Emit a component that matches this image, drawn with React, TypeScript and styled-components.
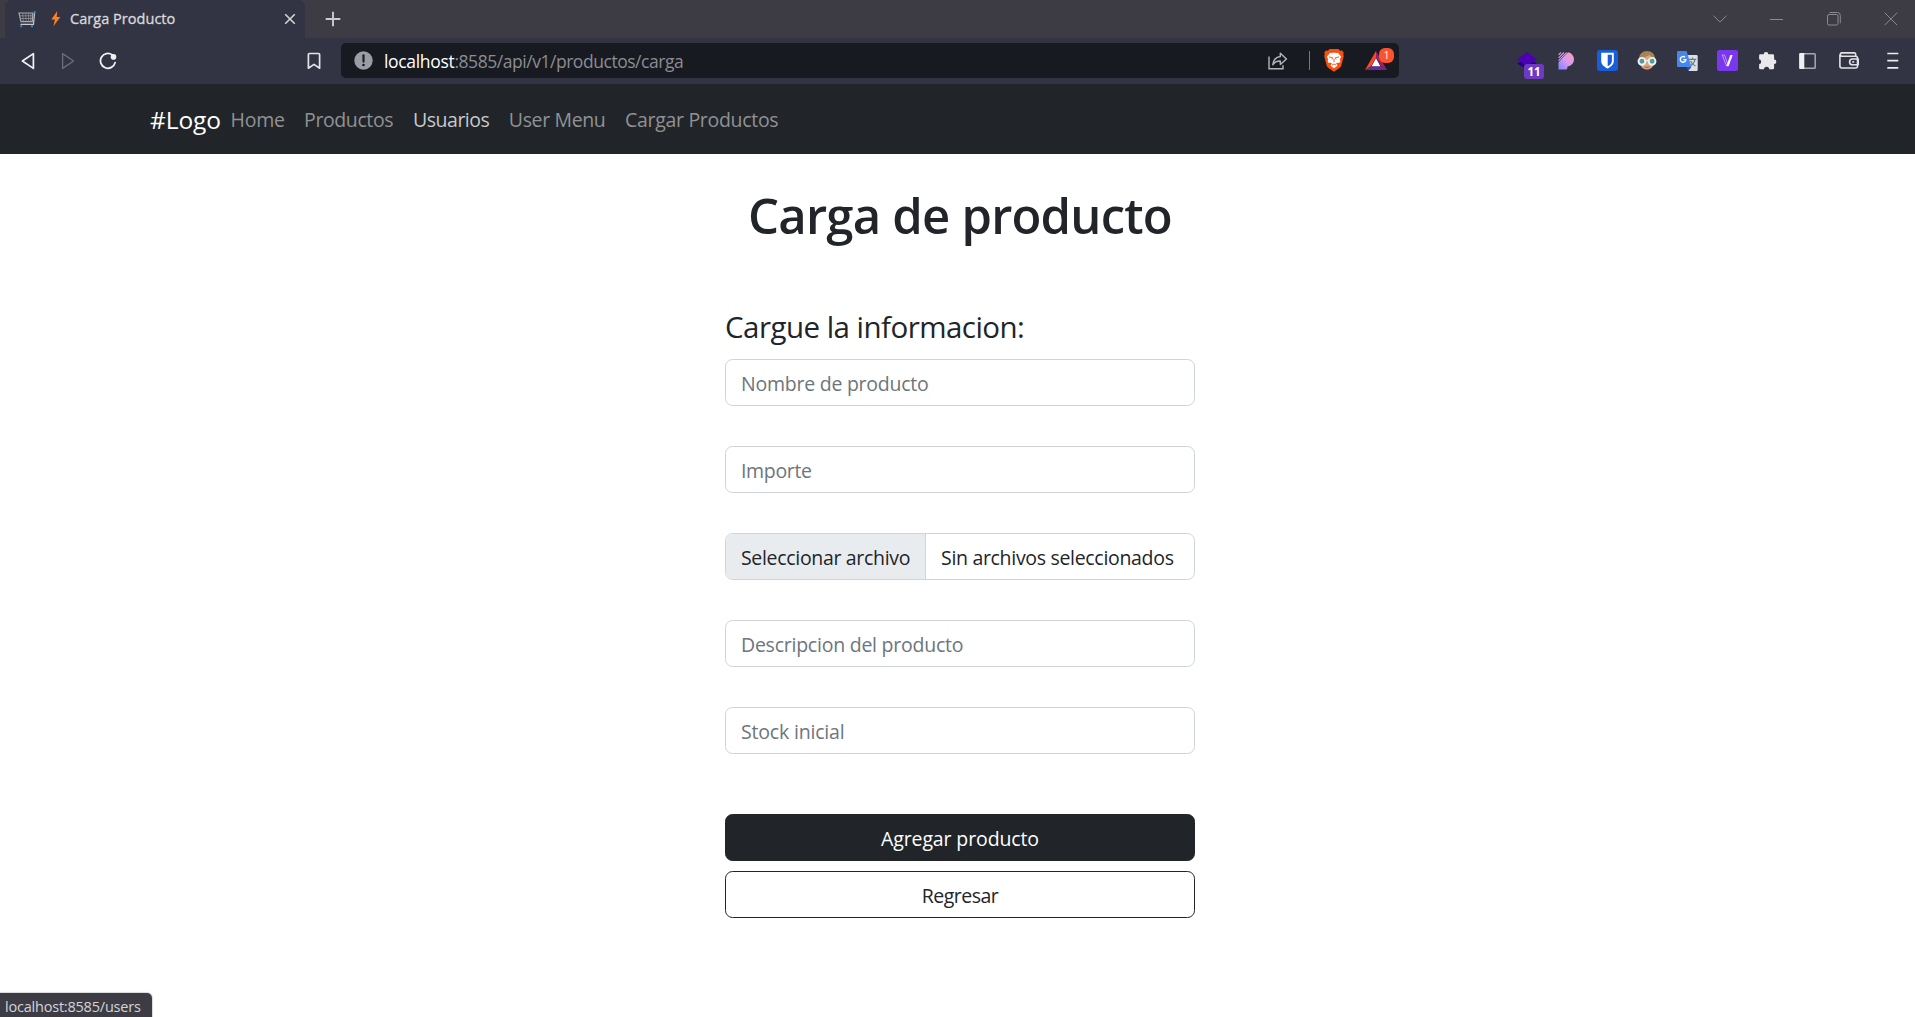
import React from "react";
import styled, { createGlobalStyle } from "styled-components";

const Global = createGlobalStyle`
  * { box-sizing: border-box; }
  body {
    margin: 0;
    background: #fff;
    color: #212529;
    font-family: "Open Sans", "Noto Sans", sans-serif;
    font-size: 19.5px;
    overflow: hidden;
  }
  svg { display: block; flex: none; }
`;

const Window = styled.div`
  display: flex;
  flex-direction: column;
  width: 100%;
  height: 1017px;
  position: relative;
`;

/* ---------- browser chrome ---------- */

const TabStrip = styled.div`
  display: flex;
  height: 38px;
  padding-left: 5px;
  background: #3d3c45;
`;

const Tab = styled.div`
  display: flex;
  align-items: center;
  width: 300px;
  padding: 0 9px 0 13px;
  border-radius: 7px 7px 0 0;
  background: #323443;
`;

const TabTitle = styled.span`
  flex: 1;
  margin-left: 3px;
  padding-bottom: 1px;
  font-size: 14.5px;
  letter-spacing: 0.04px;
  color: #d9d9dd;
  -webkit-text-stroke: 0.3px #d9d9dd;
  white-space: nowrap;
`;

const IconSlot = styled.div<{ $w: number }>`
  display: flex;
  align-items: center;
  justify-content: center;
  flex: none;
  width: ${(p) => p.$w}px;
  height: 100%;
`;

const BoltSlot = styled(IconSlot)`
  padding-left: 8px;
`;

const WindowControls = styled.div`
  display: flex;
  gap: 10px;
  margin-left: auto;
`;

const Toolbar = styled.div`
  display: flex;
  align-items: center;
  height: 46px;
  padding-bottom: 1px;
  background: #323443;
`;

const NavButtons = styled.div`
  display: flex;
  height: 100%;
  padding-left: 8px;
`;

const BookmarkSlot = styled(IconSlot)`
  margin: 0 7px 0 auto;
`;

const ToolbarStart = styled.div`
  display: flex;
  width: 341px;
  height: 100%;
`;

const AddressBar = styled.div`
  display: flex;
  align-items: center;
  width: 1058px;
  height: 35px;
  padding-left: 13px;
  border-radius: 5px;
  background: #171a21;
`;

const Url = styled.div`
  flex: 1;
  margin-left: 11px;
  font-size: 17.5px;
  letter-spacing: -0.46px;
  color: #8b8d92;
  white-space: nowrap;
`;

const Host = styled.span`
  letter-spacing: -0.32px;
  color: #fff;
`;

const Divider = styled.div`
  width: 1px;
  height: 19px;
  margin: 0 14px 0 21px;
  background: #77787c;
`;

const BadgeHost = styled.div`
  position: relative;
  display: flex;
`;

const Rewards = styled(BadgeHost)`
  margin: 0 12px 0 21px;
`;

const RewardBadge = styled.span`
  position: absolute;
  left: 14px;
  top: -3px;
  width: 15px;
  height: 15px;
  border-radius: 6px;
  background: #fb542b;
  color: #fff;
  font-size: 10px;
  line-height: 15px;
  text-align: center;
`;

const CountBadge = styled.span`
  position: absolute;
  left: 7px;
  top: 12px;
  width: 20px;
  height: 15px;
  border-radius: 3px;
  background: #6f3ac2;
  color: #fff;
  font-size: 11.5px;
  font-weight: 700;
  line-height: 16px;
  text-align: center;
`;

const Extensions = styled.div`
  display: flex;
  height: 100%;
  margin-left: auto;
`;

/* ---------- page ---------- */

const Navbar = styled.nav`
  display: flex;
  align-items: center;
  height: 70px;
  padding-left: 150px;
  background: #212529;
`;

const Brand = styled.span`
  width: 80.5px;
  font-size: 24.5px;
  letter-spacing: -0.1px;
  color: #fff;
`;

const NavLinks = styled.div`
  display: grid;
  grid-template-columns: 73.6px 109px 95.7px 116.2px auto;
`;

const NavLink = styled.span<{ $tracking: number; $active?: boolean }>`
  letter-spacing: ${(p) => p.$tracking}px;
  white-space: nowrap;
  color: ${(p) => (p.$active ? "#c8c9ca" : "#909294")};
`;

const Main = styled.main`
  display: flex;
  flex-direction: column;
  align-items: center;
  padding: 31px 0 0 5px;
`;

const Title = styled.h1`
  margin: 0;
  font-size: 49px;
  font-weight: 600;
  line-height: 60px;
  letter-spacing: -0.78px;
`;

const Form = styled.form`
  display: flex;
  flex-direction: column;
  width: 470px;
  margin-top: 59px;
`;

const Legend = styled.div`
  margin: 0 0 9px;
  font-size: 29.5px;
  line-height: 46px;
  letter-spacing: -0.53px;
  white-space: nowrap;
`;

const Fields = styled.div`
  display: flex;
  flex-direction: column;
  gap: 40px;
`;

const Input = styled.input<{ $tracking: number }>`
  width: 100%;
  height: 47px;
  padding: 2px 15px 0;
  border: 1px solid #ced4da;
  border-radius: 7.5px;
  outline: none;
  background: #fff;
  font-family: inherit;
  font-size: 19.5px;
  letter-spacing: ${(p) => p.$tracking}px;
  color: #212529;
  &::placeholder { color: #6c757d; opacity: 1; }
`;

const FileField = styled.div`
  display: flex;
  height: 47px;
  border: 1px solid #ced4da;
  border-radius: 7.5px;
  overflow: hidden;
  line-height: 48px;
  white-space: nowrap;
`;

const FileButton = styled.span`
  width: 200px;
  padding-left: 15px;
  border-right: 1px solid #ced4da;
  background: #e9ecef;
  letter-spacing: -0.32px;
`;

const FileName = styled.span`
  padding-left: 15px;
  letter-spacing: -0.31px;
`;

const Actions = styled.div`
  display: flex;
  flex-direction: column;
  gap: 10px;
  margin-top: 60px;
`;

const Button = styled.button<{ $outline?: boolean }>`
  height: 47px;
  padding: 1px 0 0;
  border: 1px solid #212529;
  border-radius: 7.5px;
  background: ${(p) => (p.$outline ? "#fff" : "#212529")};
  color: ${(p) => (p.$outline ? "#212529" : "#fff")};
  font-family: inherit;
  font-size: 19.5px;
  letter-spacing: ${(p) => (p.$outline ? -0.5 : -0.12)}px;
`;

const StatusBubble = styled.div`
  position: absolute;
  left: 0;
  bottom: 0;
  width: 152px;
  height: 24px;
  padding-left: 5px;
  border-top-right-radius: 5px;
  background: #3d3c45;
  color: #d4d4d8;
  font-size: 14.5px;
  line-height: 28px;
  letter-spacing: -0.21px;
  white-space: nowrap;
  box-shadow: 0 0 1px 1px rgba(0, 0, 0, 0.15);
`;

/* ---------- icons ---------- */

const CartIcon = () => (
  <svg width="18" height="17" viewBox="0 0 18 17" fill="none">
    <path d="M1 2h13.8l-.5 8.600H3z" stroke="#a9abb0" strokeWidth="1.2" />
    <path d="M1.600 4.800h13M2.200 7.500h12.300M4.700 2l.6 8.500M7.700 2l.3 8.500M10.500 2l.1 8.500M12.900 2l-.2 8.500" stroke="#8f9197" strokeWidth=".8" />
    <path d="M16.600 1.200L15.500 13.300H2.500" stroke="#c9cace" strokeWidth="1.2" />
    <path d="M16.400 2.500L16.800 0" stroke="#2196d9" strokeWidth="1.6" />
    <path d="M3.200 14.200v2M14 14.200v2" stroke="#1791dd" strokeWidth="2" />
  </svg>
);

const BoltIcon = () => (
  <svg width="10" height="16" viewBox="0 0 10 16">
    <path d="M6.300 0L.3 8.600h3.600L2.400 15.200 9.300 5.900H5.700z" fill="#fb8026" />
  </svg>
);

const CloseTabIcon = () => (
  <svg width="12" height="12" viewBox="0 0 12 12" stroke="#d4d4d8" strokeWidth="1.6">
    <path d="M1.200 1.200l9.600 9.600M10.800 1.200l-9.600 9.600" />
  </svg>
);

const PlusIcon = () => (
  <svg width="16" height="16" viewBox="0 0 16 16" stroke="#cbcbce" strokeWidth="1.9">
    <path d="M8 .7v14.600M.7 8h14.600" />
  </svg>
);

const ChevronDown = () => (
  <svg width="14" height="8" viewBox="0 0 14 8" fill="none" stroke="#8a8a8f">
    <path d="M.5.7L7 7 13.500.7" />
  </svg>
);

const MinimizeIcon = () => (
  <svg width="13" height="13" viewBox="0 0 13 13" stroke="#8a8a8f">
    <path d="M0 6.500h13" />
  </svg>
);

const RestoreIcon = () => (
  <svg width="14" height="14" viewBox="0 0 14 14" fill="none" stroke="#8a8a8f">
    <rect x=".5" y="2.5" width="10.5" height="10.5" rx="1.5" />
    <path d="M2.500.5h8a2.800 2.800 0 0 1 2.800 2.800v8" />
  </svg>
);

const CloseWindowIcon = () => (
  <svg width="14" height="14" viewBox="0 0 14 14" stroke="#8a8a8f">
    <path d="M.6.6l12.600 12.600M13.200.6L.6 13.200" />
  </svg>
);

const TriangleIcon = ({ flip }: { flip?: boolean }) => (
  <svg width="14" height="18" viewBox="0 0 14 18" fill="none" stroke={flip ? "#6c6d79" : "#f1f1f3"} strokeWidth={flip ? 1.3 : 1.7} strokeLinejoin="round">
    <path d={flip ? "M1.6 1.6v14.8L12.6 9z" : "M12.4 1.6v14.8L1.4 9z"} />
  </svg>
);

const ReloadIcon = () => (
  <svg width="18" height="18" viewBox="0 0 18 18" fill="none">
    <path d="M13.300 2.900A7.400 7.400 0 1 0 16.100 10.600" stroke="#f1f1f3" strokeWidth="1.8" strokeLinecap="round" />
    <circle cx="14.5" cy="4.9" r="2.8" fill="#f1f1f3" />
  </svg>
);

const BookmarkIcon = () => (
  <svg width="14" height="18" viewBox="0 0 14 18" fill="none" stroke="#e4e4e8" strokeWidth="1.7" strokeLinejoin="round">
    <path d="M1.400 2.500a1 1 0 0 1 1-1h9.200a1 1 0 0 1 1 1v13.700L7 12.400l-5.600 3.800z" />
  </svg>
);

const InfoIcon = () => (
  <svg width="19" height="19" viewBox="0 0 19 19">
    <circle cx="9.5" cy="9.5" r="9.2" fill="#9b9da6" />
    <path d="M9.500 4.200v6.400" stroke="#171a21" strokeWidth="2.1" strokeLinecap="round" />
    <circle cx="9.5" cy="14" r="1.3" fill="#171a21" />
  </svg>
);

const ShareIcon = () => (
  <svg width="20" height="18" viewBox="0 0 20 18" fill="none" stroke="#b4b5b8" strokeWidth="1.4">
    <path d="M1 4.400v12.400h14v-3.500" />
    <path d="M12.300 1.200l6.200 5.700-6.200 5.500V9c-3.700-.1-5.800 1.100-7.500 3.800.4-4.600 2.800-7.600 7.500-8.300z" strokeLinejoin="round" />
  </svg>
);

const BraveIcon = () => (
  <svg width="20" height="23" viewBox="0 0 20 23">
    <path d="M5.500 0h9l1.600 1.700 2-.3 1.700 2.400-.6 1.500.6 1.800-2.400 9.200c-.4 1.400-1.200 2.100-2.200 2.900L10 22.700l-5.200-3.500c-1-.8-1.800-1.500-2.200-2.900L.2 7.100l.6-1.800L.2 3.800l1.700-2.400 2 .3z" fill="#f9500f" />
    <path d="M6.100 3.700L8 4l2-.4 2 .4 1.900-.3 3.300 4-1.400 2.600.6 2-1.100 1.700-2.300-.3-.9.900 1.500 2-3.600 2.700-3.600-2.700 1.500-2-.9-.9-2.300.3-1.100-1.700.6-2-1.400-2.600z" fill="#fff" />
    <path d="M5 7.900l3.600.8-.7 1.800M15 7.900l-3.600.8.7 1.800M10 9.800v3.400M8 16l2-1 2 1" stroke="#f9500f" strokeWidth=".9" fill="none" />
  </svg>
);

const BatIcon = () => (
  <svg width="22" height="19" viewBox="0 0 22 19">
    <path d="M11 0L0 19l6-3.700 5-8.800z" fill="#ff4724" />
    <path d="M11 0l11 19-6-3.700-5-8.800z" fill="#9e1f63" />
    <path d="M0 19h22l-6-3.700H6z" fill="#662d91" />
    <path d="M11 7.200l4.400 8H6.600z" fill="#fff" />
  </svg>
);

const LayersIcon = () => (
  <svg width="20" height="18" viewBox="0 0 20 18">
    <path d="M0 11.500L5 9l5 3 5-3 5 2.500-10 6z" fill="#26007c" />
    <path d="M10 0l10 7.200-10 6.600L0 7.200z" fill="#4c00b4" />
  </svg>
);

const PicoIcon = () => (
  <svg width="18" height="18" viewBox="0 0 18 18">
    <defs>
      <linearGradient id="pico" x1="1" y1="0" x2="0" y2="1">
        <stop offset="0" stopColor="#ff9fb2" />
        <stop offset=".5" stopColor="#d79af0" />
        <stop offset="1" stopColor="#7f83ff" />
      </linearGradient>
    </defs>
    <path d="M.5 17.600V10.300L10 .3a7.200 7.200 0 0 1 0 14.200H9.400v1.300c0 1.200-.8 1.800-2 1.800z" fill="url(#pico)" />
    <path d="M.6 2.800L2.900.5M.6 5.800L5.900.5M.6 8.600L8.500.7" stroke="#d7a0e8" strokeWidth="1.1" />
  </svg>
);

const BitwardenIcon = () => (
  <svg width="21" height="21" viewBox="0 0 21 21">
    <rect width="21" height="21" rx="3" fill="#175ddc" />
    <path d="M4.200 2.700h12.600v8.200c0 3.500-2.800 5.600-6.300 7.700-3.500-2.100-6.300-4.200-6.300-7.700z" fill="#fff" />
    <path d="M10.700 4.700h4.200v6.200c0 2.200-1.600 3.800-4.200 5.400z" fill="#175ddc" />
  </svg>
);

const FaceIcon = () => (
  <svg width="20" height="19" viewBox="0 0 20 19">
    <path d="M1.800 9C1.800 3 5.500 0 10 0s8.200 3 8.200 9v4H1.800z" fill="#a58456" />
    <path d="M3.300 8.500L12.500 4l4.200 4.500v3c0 4.500-3 7-6.700 7s-6.700-2.500-6.700-7z" fill="#dca57f" />
    <path d="M7.500 15.700q2.500 1.200 5 0" stroke="#b55f50" strokeWidth="1.2" fill="none" />
    <circle cx="4.9" cy="10.3" r="3.4" fill="#5d979c" stroke="#e6f5f5" strokeWidth="1.9" />
    <circle cx="15.1" cy="10.3" r="3.4" fill="#5d979c" stroke="#e6f5f5" strokeWidth="1.9" />
    <path d="M8.600 9.600h2.800" stroke="#e6f5f5" strokeWidth="1.4" />
  </svg>
);

const TranslateIcon = () => (
  <svg width="21" height="20" viewBox="0 0 21 20">
    <path d="M8 4h11.500a1.200 1.200 0 0 1 1.200 1.200v13.600a1.200 1.200 0 0 1-1.200 1.200h-8z" fill="#dcdfe2" />
    <path d="M12 8.300h7.300M15.600 6.500v1.800M18 8.300c-.6 3-2.300 5.200-5 6.700M13.500 10c1 2.200 2.600 3.900 5 5" stroke="#637984" strokeWidth="1.2" fill="none" />
    <path d="M11.200 20l3.200-4H9.900z" fill="#254fc4" />
    <path d="M1.200 0h8.400l4.800 16H1.200A1.200 1.200 0 0 1 0 14.800V1.200A1.200 1.200 0 0 1 1.200 0z" fill="#4787ed" />
    <path d="M8 6.300a2.800 2.800 0 1 0 .9 2.300H6.300" stroke="#fff" strokeWidth="1.4" fill="none" />
  </svg>
);

const VeeIcon = () => (
  <svg width="21" height="21" viewBox="0 0 21 21">
    <rect width="21" height="21" rx="2.2" fill="#7b37ed" />
    <path d="M5.200 5l4.300 11 1.900-.2L7.500 5z" fill="none" stroke="#cdb4fa" strokeWidth=".8" />
    <path d="M13.300 5h2.400l-4 11H9.400z" fill="#fff" />
  </svg>
);

const PuzzleIcon = () => (
  <svg width="19" height="19" viewBox="0 0 19 19">
    <path d="M5.700 3.200a2.300 2.300 0 0 1 4.600 0h4.600a1.200 1.200 0 0 1 1.200 1.200v4.100a2.300 2.300 0 0 1 0 4.600v4a1.200 1.200 0 0 1-1.200 1.200h-3.700a2.600 2.600 0 0 0-5.200 0H2.300a1.200 1.200 0 0 1-1.200-1.200v-3.800a2.600 2.600 0 0 0 0-5.100V4.400a1.200 1.200 0 0 1 1.200-1.200z" fill="#e9e9ec" />
  </svg>
);

const PanelIcon = () => (
  <svg width="17" height="16" viewBox="0 0 17 16">
    <rect x=".8" y=".8" width="15.4" height="14.4" rx=".8" fill="none" stroke="#a8a9b0" strokeWidth="1.5" />
    <path d="M.3 1.200A1 1 0 0 1 1.300.1h4v15.800h-4a1 1 0 0 1-1-1z" fill="#f0f0f2" />
  </svg>
);

const WalletIcon = () => (
  <svg width="20" height="17" viewBox="0 0 20 17" fill="none" stroke="#e2e2e6" strokeWidth="1.6" strokeLinejoin="round">
    <path d="M16.700 4V2.200A1.300 1.300 0 0 0 15.400.9H2.600a1.700 1.700 0 0 0 0 3.300h14.100a1.800 1.800 0 0 1 1.800 1.800v8.200a1.800 1.800 0 0 1-1.800 1.800H2.800A1.900 1.900 0 0 1 .9 14.100V2.600" />
    <path d="M19.200 7h-5.700a2.900 2.900 0 0 0 0 5.800h5.700z" />
    <path d="M13.200 9.900h2" />
  </svg>
);

const MenuIcon = () => (
  <svg width="12" height="18" viewBox="0 0 12 18" stroke="#ececef" strokeWidth="1.7">
    <path d="M.3 1.500h11M.3 8.700h11M.3 15.900h11" />
  </svg>
);

/* ---------- composition ---------- */

const links = [
  { label: "Home", tracking: -0.2 },
  { label: "Productos", tracking: -0.4 },
  { label: "Usuarios", tracking: -0.5, active: true },
  { label: "User Menu", tracking: -0.36 },
  { label: "Cargar Productos", tracking: -0.3 },
];

export default function App() {
  return (
    <Window>
      <Global />
      <TabStrip>
        <Tab>
          <CartIcon />
          <BoltSlot $w={31}>
            <BoltIcon />
          </BoltSlot>
          <TabTitle>Carga Producto</TabTitle>
          <CloseTabIcon />
        </Tab>
        <IconSlot $w={55}>
          <PlusIcon />
        </IconSlot>
        <WindowControls>
          <IconSlot $w={47}><ChevronDown /></IconSlot>
          <IconSlot $w={47}><MinimizeIcon /></IconSlot>
          <IconSlot $w={47}><RestoreIcon /></IconSlot>
          <IconSlot $w={48}><CloseWindowIcon /></IconSlot>
        </WindowControls>
      </TabStrip>

      <Toolbar>
        <ToolbarStart>
          <NavButtons>
            <IconSlot $w={40}><TriangleIcon /></IconSlot>
            <IconSlot $w={40}><TriangleIcon flip /></IconSlot>
            <IconSlot $w={40}><ReloadIcon /></IconSlot>
          </NavButtons>
          <BookmarkSlot $w={40}><BookmarkIcon /></BookmarkSlot>
        </ToolbarStart>
        <AddressBar>
          <InfoIcon />
          <Url><Host>localhost</Host>:8585/api/v1/productos/carga</Url>
          <ShareIcon />
          <Divider />
          <BraveIcon />
          <Rewards>
            <BatIcon />
            <RewardBadge>1</RewardBadge>
          </Rewards>
        </AddressBar>
        <Extensions>
          <IconSlot $w={40}>
            <BadgeHost>
              <LayersIcon />
              <CountBadge>11</CountBadge>
            </BadgeHost>
          </IconSlot>
          <IconSlot $w={40}><PicoIcon /></IconSlot>
          <IconSlot $w={40}><BitwardenIcon /></IconSlot>
          <IconSlot $w={40}><FaceIcon /></IconSlot>
          <IconSlot $w={40}><TranslateIcon /></IconSlot>
          <IconSlot $w={40}><VeeIcon /></IconSlot>
          <IconSlot $w={40}><PuzzleIcon /></IconSlot>
          <IconSlot $w={40}><PanelIcon /></IconSlot>
          <IconSlot $w={44}><WalletIcon /></IconSlot>
          <IconSlot $w={44}><MenuIcon /></IconSlot>
        </Extensions>
      </Toolbar>

      <Navbar>
        <Brand>#Logo</Brand>
        <NavLinks>
          {links.map((l) => (
            <NavLink key={l.label} $tracking={l.tracking} $active={l.active}>{l.label}</NavLink>
          ))}
        </NavLinks>
      </Navbar>

      <Main>
        <Title>Carga de producto</Title>
        <Form>
          <Legend>Cargue la informacion:</Legend>
          <Fields>
            <Input placeholder="Nombre de producto" $tracking={-0.24} />
            <Input placeholder="Importe" $tracking={-0.35} />
            <FileField>
              <FileButton>Seleccionar archivo</FileButton>
              <FileName>Sin archivos seleccionados</FileName>
            </FileField>
            <Input placeholder="Descripcion del producto" $tracking={-0.24} />
            <Input placeholder="Stock inicial" $tracking={-0.18} />
          </Fields>
          <Actions>
            <Button type="button">Agregar producto</Button>
            <Button type="button" $outline>Regresar</Button>
          </Actions>
        </Form>
      </Main>

      <StatusBubble>localhost:8585/users</StatusBubble>
    </Window>
  );
}
